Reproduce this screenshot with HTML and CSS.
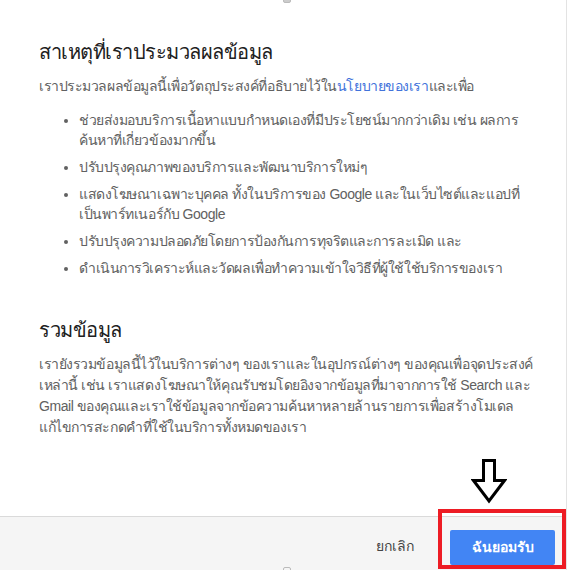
FILE: index.html
```html
<!DOCTYPE html>
<html>
<head>
	<title>ข้อกำหนดและความเป็นส่วนตัว</title>
	<link rel="stylesheet" href="styles.css">
</head>
<body>
	<div class="dialog">
		<div class="handle top"></div>
		<div class="content">
			<h2>สาเหตุที่เราประมวลผลข้อมูล</h2>
			<p>เราประมวลผลข้อมูลนี้เพื่อวัตถุประสงค์ที่อธิบายไว้ใน<a href="#">นโยบายของเรา</a>และเพื่อ</p>
			<ul>
				<li>ช่วยส่งมอบบริการเนื้อหาแบบกำหนดเองที่มีประโยชน์มากกว่าเดิม เช่น ผลการ<br>ค้นหาที่เกี่ยวข้องมากขึ้น</li>
				<li>ปรับปรุงคุณภาพของบริการและพัฒนาบริการใหม่ๆ</li>
				<li>แสดงโฆษณาเฉพาะบุคคล ทั้งในบริการของ Google และในเว็บไซต์และแอปที่<br>เป็นพาร์ทเนอร์กับ Google</li>
				<li>ปรับปรุงความปลอดภัยโดยการป้องกันการทุจริตและการละเมิด และ</li>
				<li>ดำเนินการวิเคราะห์และวัดผลเพื่อทำความเข้าใจวิธีที่ผู้ใช้ใช้บริการของเรา</li>
			</ul>
			<h2 class="second">รวมข้อมูล</h2>
			<p>เรายังรวมข้อมูลนี้ไว้ในบริการต่างๆ ของเราและในอุปกรณ์ต่างๆ ของคุณเพื่อจุดประสงค์<br>เหล่านี้ เช่น เราแสดงโฆษณาให้คุณรับชมโดยอิงจากข้อมูลที่มาจากการใช้ Search และ<br>Gmail ของคุณและเราใช้ข้อมูลจากข้อความค้นหาหลายล้านรายการเพื่อสร้างโมเดล<br>แก้ไขการสะกดคำที่ใช้ในบริการทั้งหมดของเรา</p>
		</div>
		<div class="footer">
			<button class="cancel">ยกเลิก</button>
			<button class="accept">ฉันยอมรับ</button>
		</div>
		<div class="handle bottom"></div>
		<div class="scroll-thumb"></div>

		<svg class="arrow" width="36" height="45" viewBox="0 0 36 45">
			<path d="M12.5 1.5 H23.5 V21.5 H33.5 L18 42 L2.5 21.5 H12.5 Z" fill="#fff" stroke="#000" stroke-width="3" stroke-linejoin="miter"/>
		</svg>
		<div class="highlight"></div>
	</div>
</body>
</html>
```

FILE: styles.css
```css
body {
	margin: 0;
	font-family: "Liberation Sans", Arial, sans-serif;
	background-color: #fff;
}

.dialog {
	position: relative;
	width: 566px;
	height: 570px;
	border-right: 1px solid #e3e3e3;
	display: flex;
	flex-direction: column;
	overflow: hidden;
}

.content {
	flex: 1;
	padding: 38px 10px 0 39px;
	white-space: nowrap;
}

.content h2 {
	margin: 0 0 10px;
	font-size: 20px;
	font-weight: normal;
	line-height: 28px;
	letter-spacing: -0.5px;
	color: #212121;
}

.content h2.second {
	margin-top: 38px;
}

.content p {
	margin: 0;
	font-size: 14px;
	line-height: 21px;
	letter-spacing: -0.45px;
	color: #616161;
}

.content a {
	color: #4273db;
	text-decoration: none;
}

.content ul {
	margin: 13px 0 0;
	padding-left: 40px;
	color: #616161;
	font-size: 14px;
	line-height: 20px;
	letter-spacing: -0.45px;
}

.content li {
	margin-bottom: 7px;
}

.footer {
	height: 53px;
	border-top: 1px solid #dadada;
	background-color: #f5f5f5;
	display: flex;
	align-items: center;
	justify-content: flex-end;
	gap: 36px;
	padding-right: 11px;
}

.footer button {
	font-family: "Liberation Sans", Arial, sans-serif;
	font-size: 14px;
	border: none;
	cursor: pointer;
}

.cancel {
	background: none;
	color: #444;
	padding: 0;
	margin-top: 4px;
}

.accept {
	width: 105px;
	height: 35px;
	margin-top: 7px;
	background-color: #4285f4;
	color: #fff;
	font-weight: bold;
	border-radius: 2px;
}

.handle {
	position: absolute;
	left: 283px;
	width: 6px;
	height: 4px;
	border: 1px solid #bbb;
	border-radius: 2px;
}

.handle.top {
	top: -3px;
	background-color: #ccc;
}

.handle.bottom {
	bottom: -3px;
}

.scroll-thumb {
	position: absolute;
	right: -1px;
	top: 259px;
	width: 1px;
	height: 311px;
	background-color: #a0a0a0;
}

.arrow {
	position: absolute;
	left: 471px;
	top: 459px;
}

.highlight {
	position: absolute;
	left: 438px;
	top: 509px;
	width: 120px;
	height: 52px;
	border: 4px solid #ed1c24;
}
```
